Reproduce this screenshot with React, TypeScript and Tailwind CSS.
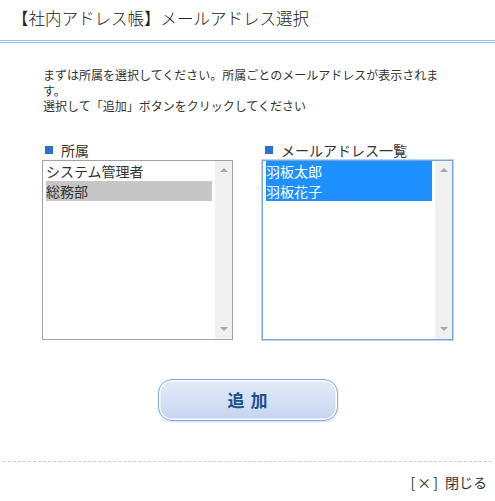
import React from "react";

const font = { fontFamily: '"Noto Sans CJK JP", "Noto Sans", sans-serif' };

function ScrollTrack() {
  return (
    <div className="flex w-[17px] shrink-0 flex-col items-center justify-between bg-[#f0f0f0] pb-[8px] pt-[7px]">
      <div className="h-0 w-0 border-x-[4px] border-b-[4px] border-x-transparent border-b-[#a6a6a6]" />
      <div className="h-0 w-0 border-x-[4px] border-t-[4px] border-x-transparent border-t-[#a6a6a6]" />
    </div>
  );
}

function ListBox({
  label,
  items,
  selected,
  tone,
  focused,
}: {
  label: string;
  items: string[];
  selected: number[];
  tone: "gray" | "blue";
  focused?: boolean;
}) {
  return (
    <div className="w-[191px]">
      <div className="flex h-[20px] items-center">
        <span className="ml-[3px] mr-[8px] h-[8px] w-[8px] bg-[#2b6fd3]" />
        <span className="text-[14px] leading-[20px] text-[#333]">{label}</span>
      </div>
      <div
        className={
          focused
            ? "flex h-[180px] border border-[#7ba3e0] shadow-[0_0_0_1px_#bcd2f1]"
            : "flex h-[180px] border border-[#a3a3a3]"
        }
      >
        <div className="flex-1 px-[3px]">
          {items.map((item, i) => {
            const on = selected.includes(i);
            const cls = on
              ? tone === "blue"
                ? "bg-[#1e90ff] text-white"
                : "bg-[#c6c6c6] text-[#333]"
              : "text-[#333]";
            return (
              <div key={item} className={`h-[20px] text-[14px] leading-[20px] ${cls}`}>
                {item}
              </div>
            );
          })}
        </div>
        <ScrollTrack />
      </div>
    </div>
  );
}

export default function App() {
  return (
    <div className="h-[501px] w-[495px] bg-white text-[#333]" style={font}>
      <div className="h-[40px] pl-[12px] pt-[8px] text-[16.5px] font-light leading-[20px] text-[#222]">
        【社内アドレス帳】メールアドレス選択
      </div>
      <div className="h-[3px] border-y border-[#99c2f0]" />

      <p className="ml-[43px] mt-[24px] w-[400px] text-[12px] leading-[15.5px]">
        まずは所属を選択してください。所属ごとのメールアドレスが表示されます。
        <br />
        選択して「追加」ボタンをクリックしてください
      </p>

      <div className="ml-[42px] mt-[26px] flex gap-[29px]">
        <ListBox label="所属" items={["システム管理者", "総務部"]} selected={[1]} tone="gray" />
        <ListBox
          label="メールアドレス一覧"
          items={["羽板太郎", "羽板花子"]}
          selected={[0, 1]}
          tone="blue"
          focused
        />
      </div>

      <button className="mx-auto mt-[39px] flex h-[42px] w-[180px] items-center justify-center rounded-[14px] border border-[#86aae0] bg-gradient-to-b from-[#e3ebf8] to-[#c5d5ef] text-[17px] font-bold tracking-[6px] text-[#1d4e8f] shadow-[inset_0_0_0_1.5px_#ffffff,0_1px_2px_rgba(120,150,200,0.35)]">
        <span className="pl-[6px]">追加</span>
      </button>

      <div className="mx-[3px] mt-[40px] border-t border-dashed border-[#cfcfcf]" />
      <div className="flex justify-end pr-[8px] pt-[11px] text-[14px] leading-[18px] text-[#333]">
        <span className="tracking-[2px]">[×]</span>
        <span className="ml-[5px]">閉じる</span>
      </div>
    </div>
  );
}
